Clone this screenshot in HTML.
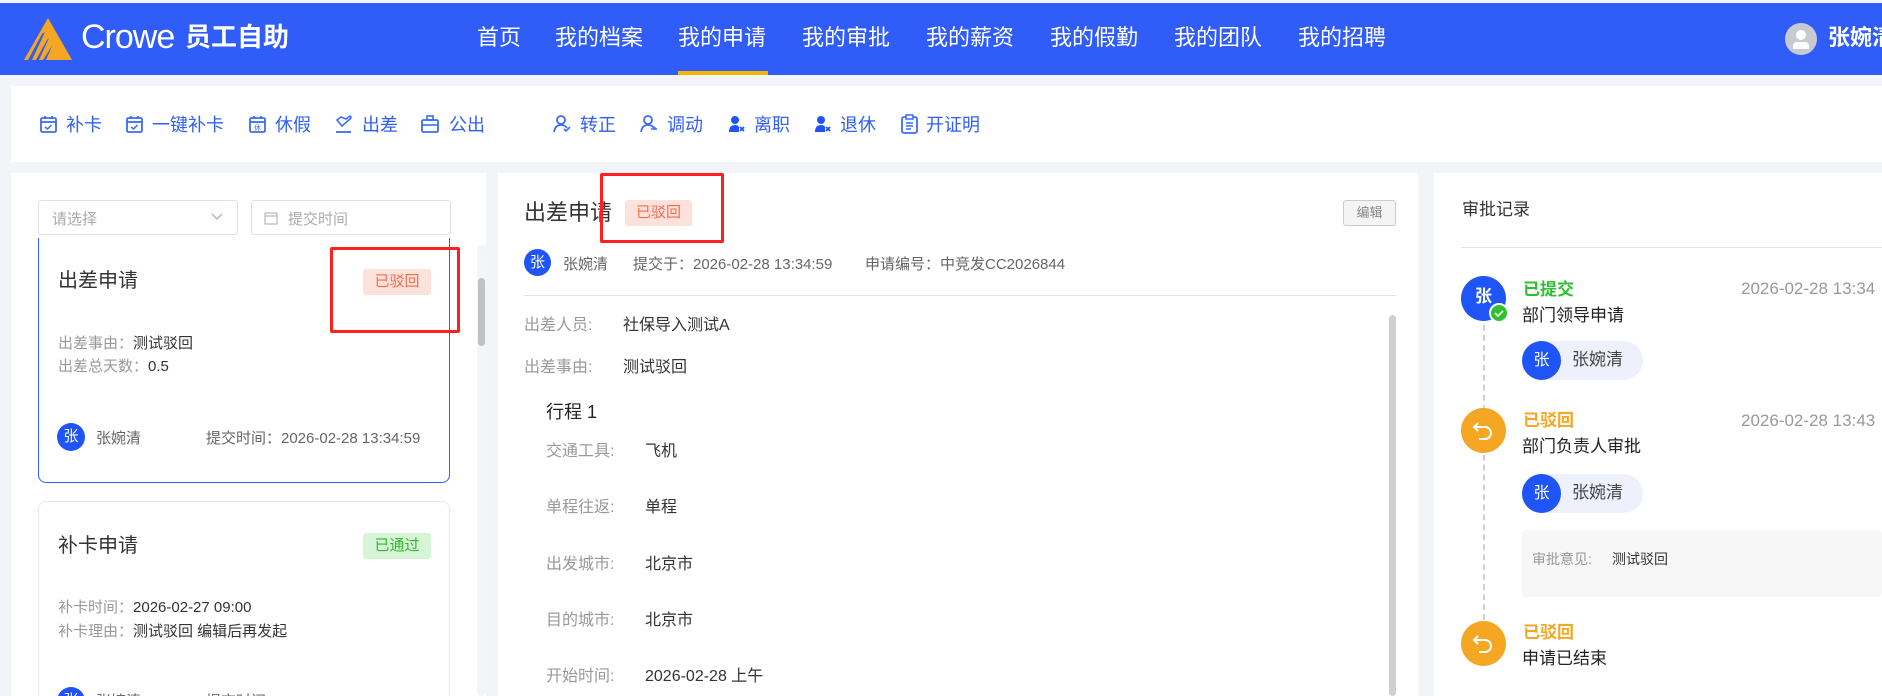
<!DOCTYPE html>
<html style="overflow:hidden"><head><meta charset="utf-8"><style>
*{margin:0;padding:0;box-sizing:border-box}
html,body{width:1882px;height:696px;overflow:hidden}
body{background:#f3f4f8;font-family:"Liberation Sans","Noto Sans CJK SC",sans-serif;color:#333}
#w{position:relative;width:1882px;height:696px;overflow:hidden}
.abs{position:absolute;white-space:nowrap}
.hdr{position:absolute;left:0;top:3px;width:1882px;height:72px;background:#305cf8}
.nav{position:absolute;top:24px;color:#fff;font-size:22px;line-height:28px}
.tb{position:absolute;left:11px;top:86px;width:1871px;height:76px;background:#fff}
.ti{position:absolute;top:113px;color:#2f5ef8;font-size:18px;line-height:24px}
.ic{position:absolute;top:114px}
.panel{position:absolute;background:#fff;top:173px;height:523px}
.tag{position:absolute;font-size:15px;text-align:center;border-radius:3px;line-height:26px}
.av{position:absolute;border-radius:50%;background:#1f55f6;color:#fff;text-align:center}
.g{color:#999}
</style></head><body><div id="w">
<div class="hdr"></div>
<svg class="abs" style="left:22px;top:16px" width="52" height="46" viewBox="0 0 52 46">
<polygon points="26,2 50,44 2,44" fill="#f5a623"/>
<polygon points="20,18 23,16 10,44 6,44" fill="#305cf8"/>
<polygon points="25,24 27,22 17,44 14,44" fill="#305cf8"/>
<polygon points="30,30 31,28 24,44 21,44" fill="#305cf8"/>
<polygon points="28,44 33,34 38,44" fill="#305cf8" opacity="0"/>
</svg>
<div class="abs" style="left:81px;top:17px;color:#fff;font-size:34px;line-height:40px;letter-spacing:-1px">Crowe</div>
<div class="abs" style="left:185px;top:20px;color:#fff;font-size:26px;font-weight:bold;line-height:34px">员工自助</div>
<div class="nav" style="left:477px">首页</div>
<div class="nav" style="left:555px">我的档案</div>
<div class="nav" style="left:678px">我的申请</div>
<div class="abs" style="left:678px;top:71px;width:90px;height:4px;background:#f7b500"></div>
<div class="nav" style="left:802px">我的审批</div>
<div class="nav" style="left:926px">我的薪资</div>
<div class="nav" style="left:1050px">我的假勤</div>
<div class="nav" style="left:1174px">我的团队</div>
<div class="nav" style="left:1298px">我的招聘</div>
<div class="abs" style="left:1785px;top:23px;width:32px;height:32px;border-radius:50%;background:#c8cad2"><div style="position:absolute;left:11px;top:7px;width:10px;height:10px;border-radius:50%;background:#fff"></div><div style="position:absolute;left:8px;top:19px;width:16px;height:7px;border-radius:4px 4px 0 0;background:#fff"></div></div>
<div class="abs" style="left:1828px;top:24px;color:#fff;font-size:22px;font-weight:bold;line-height:28px">张婉清</div>

<div class="tb"></div>
<svg width="0" height="0" style="position:absolute"><defs>
<g id="cal"><rect x="2" y="4" width="15" height="14" rx="1.5" fill="none" stroke="#3b6cf6" stroke-width="1.8"/><line x1="2" y1="8" x2="17" y2="8" stroke="#3b6cf6" stroke-width="1.8"/><line x1="6" y1="2" x2="6" y2="5" stroke="#3b6cf6" stroke-width="1.8"/><line x1="13" y1="2" x2="13" y2="5" stroke="#3b6cf6" stroke-width="1.8"/></g>
<g id="usr"><circle cx="9" cy="6" r="4" fill="none" stroke="#3b6cf6" stroke-width="1.8"/><path d="M2 18 Q3 11 9 11 Q13 11 15 14" fill="none" stroke="#3b6cf6" stroke-width="1.8"/></g>
</defs></svg>
<svg class="ic" style="left:39px" width="20" height="20"><use href="#cal"/><path d="M6 13l2.5 2 4-4" fill="none" stroke="#3b6cf6" stroke-width="1.5"/></svg><div class="ti" style="left:66px">补卡</div>
<svg class="ic" style="left:125px" width="20" height="20"><use href="#cal"/><path d="M6 13l2.5 2 4-4" fill="none" stroke="#3b6cf6" stroke-width="1.5"/></svg><div class="ti" style="left:152px">一键补卡</div>
<svg class="ic" style="left:248px" width="20" height="20"><use href="#cal"/><text x="9.5" y="16" font-size="7" text-anchor="middle" fill="#3b6cf6" font-family="Noto Sans CJK SC">休</text></svg><div class="ti" style="left:275px">休假</div>
<svg class="ic" style="left:334px" width="20" height="20"><path d="M3 6 L8 12 L16 5 Q18 3 16 2 L12 5 L7 3 Z" fill="none" stroke="#3b6cf6" stroke-width="1.6"/><line x1="2" y1="18" x2="17" y2="18" stroke="#3b6cf6" stroke-width="1.8"/></svg><div class="ti" style="left:362px">出差</div>
<svg class="ic" style="left:420px" width="20" height="20"><rect x="2" y="6" width="16" height="12" rx="1.5" fill="none" stroke="#3b6cf6" stroke-width="1.8"/><rect x="7" y="2" width="6" height="4" fill="none" stroke="#3b6cf6" stroke-width="1.6"/><line x1="2" y1="11" x2="18" y2="11" stroke="#3b6cf6" stroke-width="1.6"/></svg><div class="ti" style="left:449px">公出</div>
<svg class="ic" style="left:552px" width="20" height="20"><use href="#usr"/><path d="M12 15l2 2 4-4" fill="none" stroke="#3b6cf6" stroke-width="1.6"/></svg><div class="ti" style="left:580px">转正</div>
<svg class="ic" style="left:639px" width="20" height="20"><use href="#usr"/><path d="M12 15h6M15 13l2 2" fill="none" stroke="#3b6cf6" stroke-width="1.6"/></svg><div class="ti" style="left:667px">调动</div>
<svg class="ic" style="left:727px" width="20" height="20"><circle cx="8" cy="6" r="4" fill="#1f55f6"/><path d="M2 18 Q2 11 8 11 Q11 11 12 13 L12 18 Z" fill="#1f55f6"/><path d="M13 13l4 4M17 13l-4 4" stroke="#1f55f6" stroke-width="1.8"/></svg><div class="ti" style="left:754px">离职</div>
<svg class="ic" style="left:813px" width="20" height="20"><circle cx="8" cy="6" r="4" fill="#1f55f6"/><path d="M2 18 Q2 11 8 11 Q11 11 12 13 L12 18 Z" fill="#1f55f6"/><path d="M13 13l4 4M17 13l-4 4" stroke="#1f55f6" stroke-width="1.8"/></svg><div class="ti" style="left:840px">退休</div>
<svg class="ic" style="left:900px" width="20" height="20"><rect x="2" y="3" width="15" height="16" rx="2" fill="none" stroke="#3b6cf6" stroke-width="1.8"/><rect x="6" y="1" width="7" height="4" fill="#fff" stroke="#3b6cf6" stroke-width="1.5"/><path d="M6 9h7M6 12h7M6 15h5" stroke="#3b6cf6" stroke-width="1.4"/></svg><div class="ti" style="left:926px">开证明</div>

<!-- left panel -->
<div class="panel" style="left:11px;width:475px"></div>
<div class="abs" style="left:38px;top:200px;width:200px;height:35px;border:1px solid #dcdfe6;border-radius:3px"><span class="abs" style="left:13px;top:7px;font-size:15px;color:#aaa">请选择</span><svg class="abs" style="left:172px;top:12px" width="12" height="8"><path d="M1 1l5 5 5-5" fill="none" stroke="#aaa" stroke-width="1.2"/></svg></div>
<div class="abs" style="left:251px;top:200px;width:200px;height:35px;border:1px solid #dcdfe6;border-radius:3px"><svg class="abs" style="left:12px;top:10px" width="14" height="14"><rect x="1" y="2" width="12" height="11" fill="none" stroke="#aaa"/><line x1="1" y1="5" x2="13" y2="5" stroke="#aaa"/></svg><span class="abs" style="left:36px;top:7px;font-size:15px;color:#aaa">提交时间</span></div>
<div class="abs" style="left:38px;top:238px;width:412px;height:245px;border:1px solid #2f5ef8;border-top:none;border-radius:0 0 8px 8px"></div>
<div class="abs" style="left:58px;top:268px;font-size:20px;line-height:26px;color:#333">出差申请</div>
<div class="tag" style="left:363px;top:269px;width:68px;background:#fde2dc;color:#f56c4c">已驳回</div>
<div class="abs" style="left:330px;top:247px;width:130px;height:86px;border:3px solid #ff2020;border-radius:2px"></div>
<div class="abs" style="left:58px;top:334px;font-size:15px;line-height:20px"><span class="g">出差事由：</span>测试驳回</div>
<div class="abs" style="left:58px;top:357px;font-size:15px;line-height:20px"><span class="g">出差总天数：</span>0.5</div>
<div class="av" style="left:57px;top:423px;width:28px;height:28px;font-size:15px;line-height:28px">张</div>
<div class="abs" style="left:96px;top:427px;font-size:15px;color:#666">张婉清</div>
<div class="abs" style="left:206px;top:427px;font-size:15px;color:#666">提交时间：2026-02-28 13:34:59</div>
<div class="abs" style="left:38px;top:501px;width:412px;height:220px;border:1px solid #e4e7ed;border-radius:8px"></div>
<div class="abs" style="left:58px;top:533px;font-size:20px;line-height:26px">补卡申请</div>
<div class="tag" style="left:363px;top:533px;width:68px;background:#d6f5d6;color:#2fb82f">已通过</div>
<div class="abs" style="left:58px;top:598px;font-size:15px;line-height:20px"><span class="g">补卡时间：</span>2026-02-27 09:00</div>
<div class="abs" style="left:58px;top:622px;font-size:15px;line-height:20px"><span class="g">补卡理由：</span>测试驳回 编辑后再发起</div>
<div class="av" style="left:57px;top:687px;width:28px;height:28px;font-size:15px;line-height:28px">张</div>
<div class="abs" style="left:96px;top:690px;font-size:15px;color:#666">张婉清</div>
<div class="abs" style="left:206px;top:690px;font-size:15px;color:#666">提交时间：2026-02-28 13:13:58</div>
<div class="abs" style="left:477px;top:245px;width:9px;height:451px;background:#f5f5f5;border-radius:4px"></div>
<div class="abs" style="left:478px;top:278px;width:7px;height:68px;background:#c1c1c1;border-radius:4px"></div>

<!-- middle -->
<div class="panel" style="left:498px;width:920px"></div>
<div class="abs" style="left:524px;top:199px;font-size:22px;line-height:28px">出差申请</div>
<div class="tag" style="left:625px;top:200px;width:67px;background:#fde2dc;color:#f56c4c">已驳回</div>
<div class="abs" style="left:600px;top:173px;width:124px;height:70px;border:3px solid #ff2020;border-radius:2px"></div>
<div class="abs" style="left:1343px;top:200px;width:53px;height:26px;border:1px solid #ccc;border-radius:3px;background:#f4f4f4;color:#888;font-size:13px;text-align:center;line-height:24px">编辑</div>
<div class="av" style="left:524px;top:249px;width:27px;height:27px;font-size:15px;line-height:27px">张</div>
<div class="abs" style="left:563px;top:253px;font-size:15px;color:#666">张婉清</div>
<div class="abs" style="left:633px;top:253px;font-size:15px;color:#666">提交于：2026-02-28 13:34:59</div>
<div class="abs" style="left:865px;top:253px;font-size:15px;color:#666">申请编号：中竞发CC2026844</div>
<div class="abs" style="left:524px;top:295px;width:872px;height:1px;background:#e4e4e4"></div>
<div class="abs" style="left:1389px;top:315px;width:7px;height:381px;background:#cfcfcf;border-radius:4px"></div>
<div class="abs" style="left:524px;top:315px;font-size:16px;line-height:22px"><span class="g" style="display:inline-block;width:99px">出差人员:</span>社保导入测试A</div>
<div class="abs" style="left:524px;top:357px;font-size:16px;line-height:22px"><span class="g" style="display:inline-block;width:99px">出差事由:</span>测试驳回</div>
<div class="abs" style="left:546px;top:400px;font-size:18px;line-height:24px;color:#222">行程 1</div>
<div class="abs" style="left:546px;top:441px;font-size:16px;line-height:22px"><span class="g" style="display:inline-block;width:99px">交通工具:</span>飞机</div>
<div class="abs" style="left:546px;top:497px;font-size:16px;line-height:22px"><span class="g" style="display:inline-block;width:99px">单程往返:</span>单程</div>
<div class="abs" style="left:546px;top:554px;font-size:16px;line-height:22px"><span class="g" style="display:inline-block;width:99px">出发城市:</span>北京市</div>
<div class="abs" style="left:546px;top:610px;font-size:16px;line-height:22px"><span class="g" style="display:inline-block;width:99px">目的城市:</span>北京市</div>
<div class="abs" style="left:546px;top:666px;font-size:16px;line-height:22px"><span class="g" style="display:inline-block;width:99px">开始时间:</span>2026-02-28 上午</div>

<!-- right -->
<div class="panel" style="left:1434px;width:448px"></div>
<div class="abs" style="left:1462px;top:199px;font-size:17px;line-height:22px">审批记录</div>
<div class="abs" style="left:1461px;top:247px;width:421px;height:1px;background:#e4e4e4"></div>
<div class="abs" style="left:1483px;top:325px;width:0;height:305px;border-left:2px dashed #d0d0d0"></div>
<div class="av" style="left:1461px;top:276px;width:45px;height:45px;font-size:17px;line-height:42px;font-weight:bold">张</div>
<div class="abs" style="left:1489px;top:303px;width:20px;height:20px;border-radius:50%;background:#2fc02f;border:2px solid #fff"><svg class="abs" style="left:3px;top:4px" width="10" height="8"><path d="M1 4l3 3 5-5" fill="none" stroke="#fff" stroke-width="1.6"/></svg></div>
<div class="abs" style="left:1523px;top:279px;font-size:17px;font-weight:bold;color:#2fc02f;line-height:22px">已提交</div>
<div class="abs" style="left:1741px;top:278px;font-size:17px;color:#999;line-height:22px">2026-02-28 13:34</div>
<div class="abs" style="left:1522px;top:305px;font-size:17px;line-height:22px;color:#222">部门领导申请</div>
<div class="abs" style="left:1522px;top:341px;width:121px;height:39px;border-radius:20px;background:#eef0fb"></div>
<div class="av" style="left:1522px;top:341px;width:39px;height:39px;font-size:16px;line-height:39px">张</div>
<div class="abs" style="left:1572px;top:349px;font-size:17px;line-height:22px;color:#444">张婉清</div>

<div class="abs" style="left:1461px;top:408px;width:45px;height:45px;border-radius:50%;background:#f5a623"><svg class="abs" style="left:11px;top:11px" width="24" height="24"><path d="M6 4L2 8l4 4M2 8h11a6 6 0 0 1 0 12H7" fill="none" stroke="#fff" stroke-width="2"/></svg></div>
<div class="abs" style="left:1523px;top:410px;font-size:17px;font-weight:bold;color:#f5a623;line-height:22px">已驳回</div>
<div class="abs" style="left:1741px;top:410px;font-size:17px;color:#999;line-height:22px">2026-02-28 13:43</div>
<div class="abs" style="left:1522px;top:436px;font-size:17px;line-height:22px;color:#222">部门负责人审批</div>
<div class="abs" style="left:1522px;top:474px;width:121px;height:39px;border-radius:20px;background:#eef0fb"></div>
<div class="av" style="left:1522px;top:474px;width:39px;height:39px;font-size:16px;line-height:39px">张</div>
<div class="abs" style="left:1572px;top:482px;font-size:17px;line-height:22px;color:#444">张婉清</div>
<div class="abs" style="left:1522px;top:530px;width:360px;height:67px;background:#f7f7f7;border-radius:4px"></div>
<div class="abs" style="left:1532px;top:549px;font-size:14px;line-height:20px"><span class="g" style="display:inline-block;width:80px">审批意见:</span>测试驳回</div>

<div class="abs" style="left:1461px;top:621px;width:45px;height:45px;border-radius:50%;background:#f5a623"><svg class="abs" style="left:11px;top:11px" width="24" height="24"><path d="M6 4L2 8l4 4M2 8h11a6 6 0 0 1 0 12H7" fill="none" stroke="#fff" stroke-width="2"/></svg></div>
<div class="abs" style="left:1523px;top:622px;font-size:17px;font-weight:bold;color:#f5a623;line-height:22px">已驳回</div>
<div class="abs" style="left:1522px;top:648px;font-size:17px;line-height:22px;color:#222">申请已结束</div>
</div></body></html>
